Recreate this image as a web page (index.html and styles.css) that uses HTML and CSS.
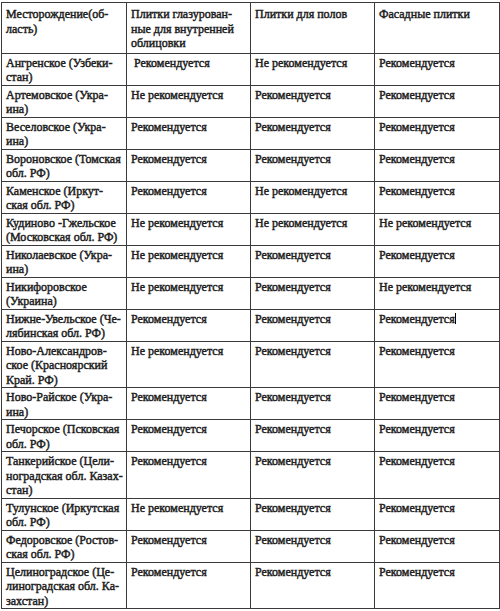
FILE: index.html
```html
<!DOCTYPE html>
<html lang="ru">
<head>
<meta charset="utf-8">
<link rel="stylesheet" href="styles.css">
</head>
<body>
<table class="deposits">
  <colgroup>
    <col class="c1"><col class="c2"><col class="c3"><col class="c4">
  </colgroup>
  <thead>
    <tr>
      <th>Месторождение(об-<br>ласть)</th>
      <th>Плитки глазурован-<br>ные для внутренней<br>облицовки</th>
      <th>Плитки для полов</th>
      <th>Фасадные плитки</th>
    </tr>
  </thead>
  <tbody>
    <tr><td>Ангренское (Узбеки-<br>стан)</td><td>&nbsp;Рекомендуется</td><td>Не рекомендуется</td><td>Рекомендуется</td></tr>
    <tr><td>Артемовское (Укра-<br>ина)</td><td>Не рекомендуется</td><td>Рекомендуется</td><td>Рекомендуется</td></tr>
    <tr><td>Веселовское (Укра-<br>ина)</td><td>Рекомендуется</td><td>Рекомендуется</td><td>Рекомендуется</td></tr>
    <tr><td>Вороновское (Томская<br>обл. РФ)</td><td>Рекомендуется</td><td>Рекомендуется</td><td>Рекомендуется</td></tr>
    <tr><td>Каменское (Иркут-<br>ская обл. РФ)</td><td>Рекомендуется</td><td>Не рекомендуется</td><td>Рекомендуется</td></tr>
    <tr><td>Кудиново -Гжельское<br>(Московская обл. РФ)</td><td>Не рекомендуется</td><td>Не рекомендуется</td><td>Не рекомендуется</td></tr>
    <tr><td>Николаевское (Укра-<br>ина)</td><td>Не рекомендуется</td><td>Рекомендуется</td><td>Рекомендуется</td></tr>
    <tr><td>Никифоровское<br>(Украина)</td><td>Не рекомендуется</td><td>Рекомендуется</td><td>Не рекомендуется</td></tr>
    <tr><td>Нижне-Увельское (Че-<br>лябинская обл. РФ)</td><td>Рекомендуется</td><td>Рекомендуется</td><td>Рекомендуется<span class="caret"></span></td></tr>
    <tr><td>Ново-Александров-<br>ское (Красноярский<br>Край. РФ)</td><td>Не рекомендуется</td><td>Рекомендуется</td><td>Рекомендуется</td></tr>
    <tr><td>Ново-Райское (Укра-<br>ина)</td><td>Рекомендуется</td><td>Рекомендуется</td><td>Рекомендуется</td></tr>
    <tr><td>Печорское (Псковская<br>обл. РФ)</td><td>Рекомендуется</td><td>Рекомендуется</td><td>Рекомендуется</td></tr>
    <tr><td>Танкерийское (Цели-<br>ноградская обл. Казах-<br>стан)</td><td>Рекомендуется</td><td>Рекомендуется</td><td>Рекомендуется</td></tr>
    <tr><td>Тулунское (Иркутская<br>обл. РФ)</td><td>Не рекомендуется</td><td>Рекомендуется</td><td>Рекомендуется</td></tr>
    <tr><td>Федоровское (Ростов-<br>ская обл. РФ)</td><td>Рекомендуется</td><td>Рекомендуется</td><td>Рекомендуется</td></tr>
    <tr><td>Целиноградское (Це-<br>линоградская обл. Ка-<br>захстан)</td><td>Рекомендуется</td><td>Рекомендуется</td><td>Рекомендуется</td></tr>
  </tbody>
</table>
</body>
</html>
```

FILE: styles.css
```css
html, body {
  margin: 0;
  padding: 0;
  background: #ffffff;
}

body {
  padding: 2px 0 0 1px;
}

.deposits {
  border-collapse: collapse;
  table-layout: fixed;
  width: 498px;
  font-family: "Liberation Serif", "Times New Roman", serif;
  font-size: 12px;
  line-height: 14.5px;
  color: #1c1c1c;
  -webkit-text-stroke: 0.45px #1c1c1c;
}

.c1 { width: 125px; }
.c2 { width: 124px; }
.c3 { width: 124px; }
.c4 { width: 125px; }

.deposits th,
.deposits td {
  border: 1px solid #3a3a3a;
  padding: 2px 3px 0 4px;
  text-align: left;
  vertical-align: top;
  white-space: nowrap;
  overflow: hidden;
}

.deposits th {
  font-weight: normal;
  padding-top: 4px;
  padding-bottom: 2px;
}

.caret {
  display: inline-block;
  width: 0;
  height: 11px;
  border-left: 1.5px solid #000;
  vertical-align: -1px;
}
```
